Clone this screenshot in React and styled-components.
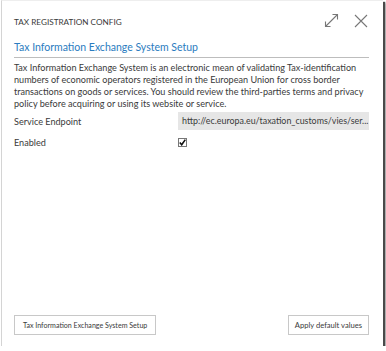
import React from "react";
import styled, { createGlobalStyle } from "styled-components";

const Global = createGlobalStyle`
  html, body {
    margin: 0;
    background: #fff;
  }
  body {
    font-family: Lato, "Open Sans", sans-serif;
    color: #333;
  }
`;

const Dialog = styled.div`
  box-sizing: border-box;
  width: 382px;
  height: 346px;
  margin-left: 1px;
  background: #fff;
  border-left: 1px solid #d4d4d4;
  border-top: 1px solid #eee;
  box-shadow: 2px 2px 1px #4a4a4a, 3px 3px 2px rgba(0, 0, 0, 0.35);
  display: flex;
  flex-direction: column;
  padding: 0 14px 11px 12px;
`;

const TitleBar = styled.div`
  display: flex;
  align-items: center;
  justify-content: space-between;
  height: 39px;
`;

const Caption = styled.div`
  font-size: 8.2px;
  color: #3a3a3a;
  padding-top: 2px;
`;

const Actions = styled.div`
  display: flex;
  align-items: center;
  gap: 12px;
`;

const IconButton = styled.span`
  display: flex;
  width: 17px;
  height: 17px;
  align-items: center;
  justify-content: center;
`;

const Heading = styled.h1`
  margin: 0;
  font-size: 10.5px;
  line-height: 14px;
  font-weight: 400;
  color: #2b7cc0;
  padding-bottom: 3px;
  border-bottom: 1px solid #bdbdbd;
`;

const Description = styled.p`
  margin: 4px 0 0;
  font-size: 9.1px;
  line-height: 12px;
  color: #3a3a3a;
  white-space: nowrap;
`;

const FieldRow = styled.div`
  display: flex;
  align-items: center;
  height: ${(p) => p.$h}px;
  margin-top: ${(p) => p.$mt || 0}px;
  font-size: 9.1px;
  color: #3a3a3a;
`;

const Label = styled.div`
  width: 164px;
`;

const ValueBox = styled.div`
  flex: 1;
  background: #e6e6e6;
  height: 18px;
  line-height: 18px;
  padding: 0 4px;
  font-size: 8.9px;
  white-space: nowrap;
  overflow: hidden;
  color: #3a3a3a;
`;

const Check = styled.span`
  box-sizing: border-box;
  width: 9px;
  height: 9px;
  border: 1px solid #777;
  display: flex;
  align-items: center;
  justify-content: center;
`;

const Footer = styled.div`
  margin-top: auto;
  display: flex;
  justify-content: space-between;
`;

const Button = styled.button`
  font-family: inherit;
  font-size: ${(p) => p.$size || 7.1}px;
  color: #3a3a3a;
  background: #fff;
  border: 1px solid #c8c8c8;
  height: 20px;
  padding: 0 ${(p) => p.$pad}px;
`;

export default function App() {
  return (
    <>
      <Global />
      <Dialog>
        <TitleBar>
          <Caption>TAX REGISTRATION CONFIG</Caption>
          <Actions>
            <IconButton>
              <svg width="15" height="15" viewBox="0 0 15 15" fill="none" stroke="#777" strokeWidth="1.1">
                <path d="M1.5 13.5 L13.5 1.5 M8.5 1.5 H13.5 V6.5 M1.5 8.5 V13.5 H6.5" />
              </svg>
            </IconButton>
            <IconButton>
              <svg width="14" height="14" viewBox="0 0 14 14" fill="none" stroke="#777" strokeWidth="1.1">
                <path d="M1 1 L13 13 M13 1 L1 13" />
              </svg>
            </IconButton>
          </Actions>
        </TitleBar>
        <Heading>Tax Information Exchange System Setup</Heading>
        <Description>
          Tax Information Exchange System is an electronic mean of validating Tax-identification
          <br />
          numbers of economic operators registered in the European Union for cross border
          <br />
          transactions on goods or services. You should review the third-parties terms and privacy
          <br />
          policy before acquiring or using its website or service.
        </Description>
        <FieldRow $h={18} $mt={2}>
          <Label>Service Endpoint</Label>
          <ValueBox>http://ec.europa.eu/taxation_customs/vies/ser...</ValueBox>
        </FieldRow>
        <FieldRow $h={24}>
          <Label>Enabled</Label>
          <Check>
            <svg width="7" height="7" viewBox="0 0 7 7" fill="none" stroke="#111" strokeWidth="1.6">
              <path d="M0.8 3.6 L2.7 5.8 L6.3 0.6" />
            </svg>
          </Check>
        </FieldRow>
        <Footer>
          <Button $pad={8}>Tax Information Exchange System Setup</Button>
          <Button $pad={6} $size={7.6}>Apply default values</Button>
        </Footer>
      </Dialog>
    </>
  );
}
